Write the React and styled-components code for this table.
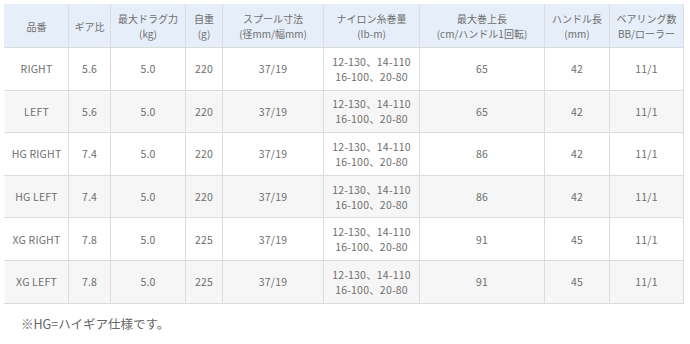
import React from 'react'
import styled, { createGlobalStyle } from 'styled-components'

const GlobalStyle = createGlobalStyle`
  body {
    margin: 0;
    background: #fff;
    font-family: "Noto Sans CJK JP", "Noto Sans", sans-serif;
  }
`

const columns = [
  { w: 64, head: ['品番'] },
  { w: 42, head: ['ギア比'] },
  { w: 75, head: ['最大ドラグ力', '(kg)'] },
  { w: 37, head: ['自重', '(g)'] },
  { w: 101, head: ['スプール寸法', '(径mm/幅mm)'] },
  { w: 96, head: ['ナイロン糸巻量', '(lb-m)'] },
  { w: 125, head: ['最大巻上長', '(cm/ハンドル1回転)'] },
  { w: 65, head: ['ハンドル長', '(mm)'] },
  { w: 74, head: ['ベアリング数', 'BB/ローラー'] },
]

const nylon = ['12-130、14-110', '16-100、20-80']

const rows = [
  ['RIGHT', '5.6', '5.0', '220', '37/19', nylon, '65', '42', '11/1'],
  ['LEFT', '5.6', '5.0', '220', '37/19', nylon, '65', '42', '11/1'],
  ['HG RIGHT', '7.4', '5.0', '220', '37/19', nylon, '86', '42', '11/1'],
  ['HG LEFT', '7.4', '5.0', '220', '37/19', nylon, '86', '42', '11/1'],
  ['XG RIGHT', '7.8', '5.0', '225', '37/19', nylon, '91', '45', '11/1'],
  ['XG LEFT', '7.8', '5.0', '225', '37/19', nylon, '91', '45', '11/1'],
]

const Lines = ({ lines }) =>
  lines.map((l, i) => <Line key={i}>{l}</Line>)

const App = () => {
  return (
    <Page>
      <GlobalStyle />
      <SpecTable>
        <colgroup>
          {columns.map((c, i) => (
            <col key={i} style={{ width: c.w }} />
          ))}
        </colgroup>
        <thead>
          <tr>
            {columns.map((c, i) => (
              <HeadCell key={i}>
                <Lines lines={c.head} />
              </HeadCell>
            ))}
          </tr>
        </thead>
        <tbody>
          {rows.map((r, i) => (
            <Row key={i} $shaded={i % 2 === 1}>
              {r.map((v, j) => (
                <Cell key={j}>
                  <Lines lines={Array.isArray(v) ? v : [v]} />
                </Cell>
              ))}
            </Row>
          ))}
        </tbody>
      </SpecTable>
      <Note>※HG=ハイギア仕様です。</Note>
    </Page>
  )
}

export default App

// Styled Components
const Page = styled.div`
  width: 690px;
  height: 344px;
  padding: 4px 0 0 4px;
  box-sizing: border-box;
`

const SpecTable = styled.table`
  width: 679px;
  table-layout: fixed;
  border-collapse: collapse;
  color: #6e6e6e;
  font-size: 10.5px;
`

const HeadCell = styled.th`
  height: 42px;
  padding: 0;
  font-size: 10px;
  font-weight: normal;
  text-align: center;
  vertical-align: middle;
  background: #e6eff9;
  border: 1px solid #dcdcdc;
  border-top-color: #e6eff9;
  border-left-color: #e6eff9;
  &:last-child {
    border-right-color: #dcdcdc;
  }
`

const Row = styled.tr`
  height: 42.6px;
  background: ${(p) => (p.$shaded ? '#f6f6f6' : '#fff')};
`

const Cell = styled.td`
  padding: 0;
  text-align: center;
  vertical-align: middle;
  border: 1px solid #dcdcdc;
  letter-spacing: 0.2px;
  &:first-child {
    border-left-color: transparent;
  }
`

const Line = styled.div`
  line-height: 15px;
`

const Note = styled.p`
  margin: 11px 0 0 17px;
  color: #666;
  font-size: 12.5px;
  line-height: 17px;
`
